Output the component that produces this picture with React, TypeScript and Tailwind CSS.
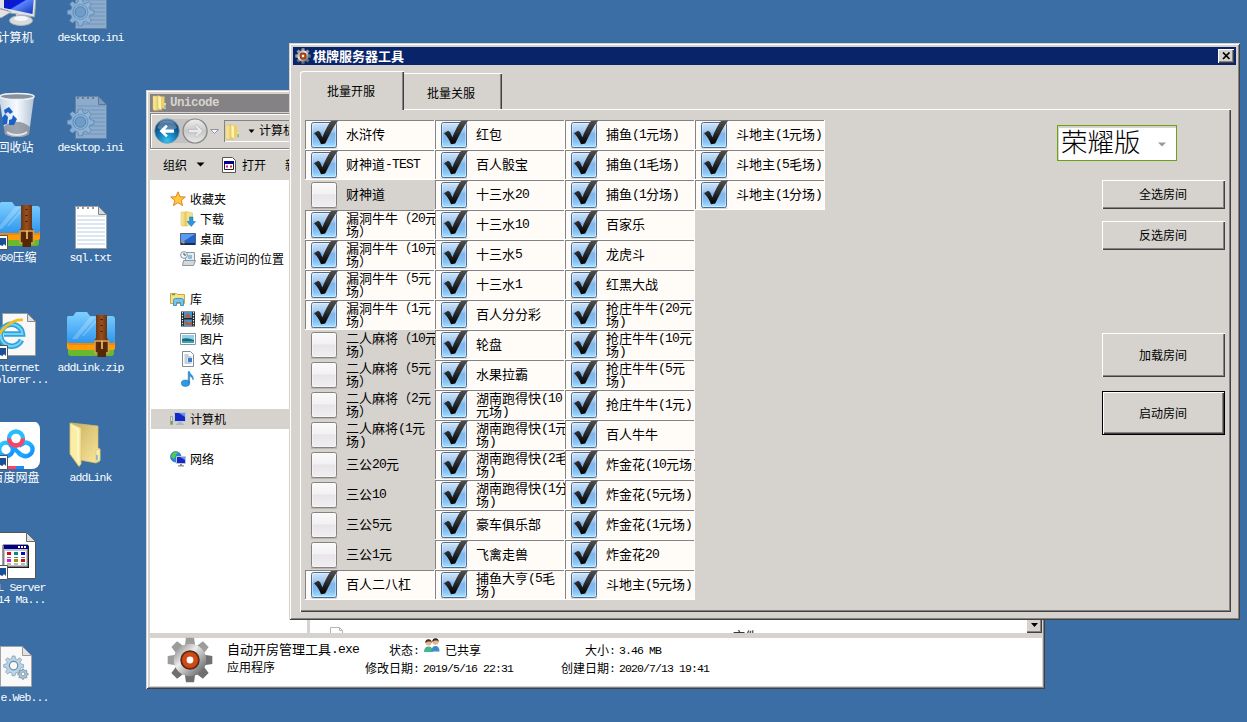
import React from "react";

const RAISED =
  "bg-[#d6d3ce] shadow-[inset_1px_1px_0_#fff,inset_-1px_-1px_0_#424142,inset_-2px_-2px_0_#848284]";
const WINDOW =
  "bg-[#d6d3ce] shadow-[inset_1px_1px_0_#d6d3ce,inset_-1px_-1px_0_#424142,inset_2px_2px_0_#fff,inset_-2px_-2px_0_#848284]";

/* Splits a label so that Latin runs take half-width monospaced cells beside full-width Han glyphs. */
function T({ s, wide = false }: { s: string; wide?: boolean }) {
  const parts = s.split(/([\x20-\x7e]+)/).filter(Boolean);
  return (
    <>
      {parts.map((p, i) =>
        /^[\x20-\x7e]+$/.test(p) ? (
          <span
            key={i}
            className={
              wide
                ? "relative -top-px font-['Liberation_Mono',monospace] text-[13px] leading-none tracking-[-0.8px]"
                : "relative -top-px font-['Liberation_Mono',monospace] text-[11.5px] leading-none tracking-[-0.9px]"
            }
          >
            {p}
          </span>
        ) : (
          <span key={i}>{p}</span>
        )
      )}
    </>
  );
}

/* ---------- drawings ---------- */

function Defs() {
  return (
    <svg width="0" height="0" className="absolute">
      <defs>
        <linearGradient id="ckBlue" x1="0" y1="0" x2="0" y2="1">
          <stop offset="0" stopColor="#d4e6f8" />
          <stop offset="0.35" stopColor="#a3c9f0" />
          <stop offset="0.45" stopColor="#7db4ea" />
          <stop offset="0.75" stopColor="#86bff2" />
          <stop offset="1" stopColor="#a9e4ff" />
        </linearGradient>
        <linearGradient id="ckGray" x1="0" y1="0" x2="0" y2="1">
          <stop offset="0" stopColor="#fbfbfb" />
          <stop offset="0.45" stopColor="#f3f1f3" />
          <stop offset="0.5" stopColor="#e7e5e8" />
          <stop offset="1" stopColor="#f1eff1" />
        </linearGradient>
        <linearGradient id="tick" x1="0" y1="0" x2="0" y2="1">
          <stop offset="0" stopColor="#505050" />
          <stop offset="0.5" stopColor="#2c2c2c" />
          <stop offset="1" stopColor="#000" />
        </linearGradient>
        <linearGradient id="fold" x1="0" y1="0" x2="1" y2="0">
          <stop offset="0" stopColor="#fbeea4" />
          <stop offset="1" stopColor="#e0bf55" />
        </linearGradient>
        <linearGradient id="foldBack" x1="0" y1="0" x2="1" y2="1">
          <stop offset="0" stopColor="#c7ae62" />
          <stop offset="1" stopColor="#fae99c" />
        </linearGradient>
        <linearGradient id="scr" x1="0" y1="0" x2="1" y2="1">
          <stop offset="0" stopColor="#1020a0" />
          <stop offset="0.45" stopColor="#0818e0" />
          <stop offset="0.5" stopColor="#5a86f8" />
          <stop offset="1" stopColor="#1030c0" />
        </linearGradient>
        <linearGradient id="bin" x1="0" y1="0" x2="1" y2="0">
          <stop offset="0" stopColor="#c6d4e4" />
          <stop offset="0.5" stopColor="#f8fbff" />
          <stop offset="1" stopColor="#b3c2d4" />
        </linearGradient>
        <linearGradient id="zipBlue" x1="0" y1="0" x2="0" y2="1">
          <stop offset="0" stopColor="#7fd0ff" />
          <stop offset="1" stopColor="#2f97ee" />
        </linearGradient>
        <linearGradient id="belt" x1="0" y1="0" x2="1" y2="0">
          <stop offset="0" stopColor="#5e2c10" />
          <stop offset="0.5" stopColor="#98501f" />
          <stop offset="1" stopColor="#5a280d" />
        </linearGradient>
        <linearGradient id="steel" x1="0" y1="0" x2="1" y2="1">
          <stop offset="0" stopColor="#777" />
          <stop offset="0.4" stopColor="#ececec" />
          <stop offset="0.65" stopColor="#a8a8a8" />
          <stop offset="1" stopColor="#4c4c4c" />
        </linearGradient>
        <radialGradient id="backBtn" cx="0.5" cy="0.9" r="0.9">
          <stop offset="0" stopColor="#2fc4f4" />
          <stop offset="0.45" stopColor="#1278b4" />
          <stop offset="0.8" stopColor="#0d4276" />
          <stop offset="1" stopColor="#6e9cc0" />
        </radialGradient>
        <linearGradient id="fwdBtn" x1="0" y1="0" x2="0" y2="1">
          <stop offset="0" stopColor="#eee" />
          <stop offset="0.5" stopColor="#c8c8c8" />
          <stop offset="1" stopColor="#e8e8e8" />
        </linearGradient>
        <linearGradient id="baidu" x1="0" y1="0" x2="1" y2="1">
          <stop offset="0" stopColor="#2cd0ff" />
          <stop offset="1" stopColor="#148cff" />
        </linearGradient>
      </defs>
    </svg>
  );
}

const GEAR =
  "M13.6 0h4.8l.8 4.6 3 1.3 4-2.8 3.3 3.3-2.7 3.9 1.2 3 4.6.8v4.8l-4.6.8-1.3 3 2.8 4-3.3 3.3-3.9-2.7-3 1.2-.9 4.5h-4.8l-.8-4.6-3-1.3-4 2.8-3.3-3.3 2.7-3.9-1.2-3-4.5-.9v-4.8l4.6-.8 1.3-3-2.8-4 3.3-3.3 3.9 2.7 3-1.2z";

/* Eight broad, blunt teeth around a solid hub. */
const COG = [0, 45, 90, 135, 180, 225, 270, 315];

function Check({ on }: { on: boolean }) {
  return (
    <svg width="30" height="30" viewBox="0 0 30 30" className="shrink-0">
      <rect x="1.5" y="27" width="27" height="2" rx="1" fill="#000" opacity="0.13" />
      <rect x="2.5" y="2.5" width="25" height="25" rx="2" fill={on ? "url(#ckBlue)" : "url(#ckGray)"} stroke={on ? "#4a6c98" : "#85827f"} />
      <rect x="3.5" y="3.5" width="23" height="23" rx="1" fill="none" stroke="#fff" strokeOpacity="0.4" />
      {on && <path d="M5 13.2 9 10.7 11 12l2.4 5.2C16.500 10 19 4.500 22 1l7.200-.6C24 7 20 16 16.200 23.600l-4.200.7C10.500 20 8.500 16.500 5 13.200z" fill="url(#tick)" />}
    </svg>
  );
}

function AppGear({ className }: { className: string }) {
  return (
    <svg viewBox="0 0 34 34" className={className}>
      {COG.map((a) => (
        <path key={a} d="M13 8l1-7.500h6L21 8z" fill={a > 45 && a < 270 ? "#6f6f6f" : "#9c9c9c"} transform={`rotate(${a} 17 17)`} />
      ))}
      <circle cx="17" cy="17" r="12" fill="url(#steel)" />
      <circle cx="17" cy="17" r="7.200" fill="#5c2a18" />
      <circle cx="17" cy="17" r="5.900" fill="#cf4a14" />
      <circle cx="17" cy="17" r="2.500" fill="#fff" />
    </svg>
  );
}

function SmallFolder({ className }: { className: string }) {
  return (
    <svg viewBox="0 0 16 16" className={className}>
      <path d="M1 1h6l1 1v13L2 15.500 1 14z" fill="url(#fold)" stroke="#d8b84c" strokeWidth="0.5" />
      <path d="M7 1.500h5.500v12H7z" fill="#ecd06a" />
      <path d="M6 0.500 9.500 2v13.500L6 13z" fill="#fdf3b4" stroke="#d8b84c" strokeWidth="0.5" />
      <path d="M12 8h2v6h-2z" fill="#f2dc7c" />
      <path d="M12.500 10h1.200v3.500h-1.200z" fill="#4ba8dd" />
    </svg>
  );
}

function Shortcut() {
  return (
    <g>
      <path d="M5 33.500h10.500v14H5z" fill="#fff" stroke="#555" />
      <path d="M8 36h6v8l-2-2-1.500 2L8 43z" fill="#1b4f95" />
    </g>
  );
}

function Page({ lines = true }: { lines?: boolean }) {
  return (
    <g>
      <path d="M8.500 4.500h23l8 8v34h-31z" fill="#fff" stroke="#9aa0a8" />
      {lines && (
        <g>
          <path d="M10 14h28M10 18h28M10 22h28M10 26h28M10 30h28M10 34h28M10 38h28M10 42h28" stroke="#b9cde0" />
          <path d="M10 6h2m3 0h2m3 0h2m3 0h2" stroke="#777" strokeWidth="1.600" />
        </g>
      )}
      <path d="M31.500 4.500v8h8z" fill="#d5d9de" stroke="#888" />
    </g>
  );
}

function ComputerIcon() {
  return (
    <svg width="48" height="48" viewBox="0 0 48 48">
      <path d="M5 14h39l-1.500 21L6 29z" fill="#dfe3e8" stroke="#9aa" />
      <path d="M12 14h30l-1.500 18L12 26z" fill="url(#scr)" />
      <path d="M0 31l7-5 12 4-10 6z" fill="#e3e3e3" stroke="#999" strokeWidth="0.600" />
      <path d="M1 32l8-5 8 2" stroke="#888" fill="none" strokeDasharray="2 1" />
      <path d="M24 32h9v6h-9z" fill="#c4c8cc" />
      <ellipse cx="29" cy="38.500" rx="11.500" ry="5" fill="#d9dcdf" stroke="#b0b4b8" />
      <ellipse cx="29" cy="36.500" rx="7" ry="2.500" fill="#f5f6f7" />
    </svg>
  );
}

function IniIcon() {
  return (
    <svg width="48" height="48" viewBox="0 0 48 48">
      <g opacity="0.42">
        <Page />
      </g>
      <g transform="translate(0.500 17) scale(0.880)" opacity="0.9">
        <path d={GEAR} transform="scale(0.92)" fill="#8fb6da" stroke="#5883b0" />
        <circle cx="14.700" cy="14.700" r="8.500" fill="none" stroke="#5f8ab6" />
        <circle cx="14.700" cy="14.700" r="6" fill="#6d9bc8" stroke="#4a7aac" />
      </g>
    </svg>
  );
}

function BinIcon() {
  return (
    <svg width="48" height="48" viewBox="0 0 48 48">
      <path d="M7 5h35l-5 37c-4 4-19 4-24 0z" fill="url(#bin)" />
      <path d="M11 35c8-7 19-7 27 0l-1 7c-5 4-18 4-24 0z" fill="#6f7780" opacity="0.65" />
      <ellipse cx="25" cy="4.500" rx="17" ry="3" fill="#87919d" stroke="#eef2f6" strokeWidth="1.500" />
      <g fill="#1a62c8">
        <path d="M12 18l5-3 4 5-3 2-2-2-3 2z" />
        <path d="M10 26l3-4 3 3-1 7-4 1z" />
        <path d="M17 33v-5l3-1 1-4 4 4-3 6z" />
      </g>
      <path d="M15 40c5 4 15 4 20 0" stroke="#e6e6e6" strokeWidth="2" fill="none" />
    </svg>
  );
}

function ZipIcon({ shortcut = false }: { shortcut?: boolean }) {
  return (
    <svg width="48" height="48" viewBox="0 0 48 48">
      <path d="M1 28h46v13c0 2-1 3-3 3H4c-2 0-3-1-3-3z" fill="#67ba30" />
      <path d="M0 22h48v15c-1 1-2 1-3 1H3c-2 0-3-1-3-3z" fill="#ff9c08" />
      <path d="M0 28h48v5H3c-2 0-3-2-3-3z" fill="#e87400" opacity="0.5" />
      <path d="M0 6c0-2 1-2 3-2h3l3-4h11l3 4h22c2 0 3 1 3 3v21c0 2-1 3-3 3H3c-2 0-3-1-3-3z" fill="url(#zipBlue)" />
      <path d="M23 5l-18 22h5L29 5zM31 5 15 24h2L34 5z" fill="#fff" opacity="0.22" />
      <path d="M29 3h11v23l2 3H27l2-3z" fill="url(#belt)" />
      <path d="M34.500 7v1m0 5v1m0 5v1" stroke="#32180a" strokeWidth="2" />
      <rect x="28" y="29" width="13.500" height="12" fill="#5a2a0c" stroke="#d8a04c" strokeWidth="1.600" />
      <path d="M30.500 31h8.500v14h-8.500z" fill="#552709" />
      <path d="M35 29v8" stroke="#ffd070" strokeWidth="1.500" />
      {shortcut && <Shortcut />}
    </svg>
  );
}

function TxtIcon() {
  return (
    <svg width="48" height="48" viewBox="0 0 48 48">
      <Page />
    </svg>
  );
}

function IeIcon() {
  return (
    <svg width="48" height="48" viewBox="0 0 48 48">
      <path d="M10.500 1.500h25l8 8v34h-33z" fill="#f8f8f8" stroke="#9a9a9a" />
      <path d="M35.500 1.500v8h8z" fill="#ddd" stroke="#888" />
      <path d="M29.500 28A11 11 0 1 1 30.500 22H12" fill="none" stroke="#2fa4dc" strokeWidth="5.500" />
      <path d="M29.500 28A11 11 0 1 1 30.500 22H12" fill="none" stroke="#79d2f4" strokeWidth="2" />
      <path d="M4 29C8 17 20 7 31 8" fill="none" stroke="#f5bd1c" strokeWidth="2.600" />
      <Shortcut />
    </svg>
  );
}

function BaiduIcon() {
  return (
    <svg width="48" height="48" viewBox="0 0 48 48">
      <rect x="0" y="-1" width="48" height="48" rx="8" fill="#fff" />
      <circle cx="14" cy="27.500" r="6.800" fill="none" stroke="url(#baidu)" strokeWidth="4.300" />
      <path d="M26.500 31q8 6.500 13 0a6.800 6.800 0 0 0-9-9.500" fill="none" stroke="url(#baidu)" strokeWidth="4.300" />
      <path d="M18 22.500 28 32" stroke="#1ba0ff" strokeWidth="4.300" />
      <path d="M27 24l5-3" stroke="#1ba0ff" strokeWidth="4" />
      <circle cx="24" cy="16.500" r="7" fill="#fff" stroke="#26bdff" strokeWidth="4.300" />
      <path d="M17 16.500a7 7 0 0 0 14 0" fill="none" stroke="#ff4262" strokeWidth="4.300" />
      <path d="M15 44h9v3h-9z" fill="#ff4262" />
      <path d="M24 44h8v3h-8z" fill="#168eff" />
      <Shortcut />
    </svg>
  );
}

function FolderIcon() {
  return (
    <svg width="48" height="48" viewBox="0 0 48 48">
      <path d="M4 1l27 3v22l2 1v12l-4 2-16-3z" fill="url(#foldBack)" stroke="#d9c06a" strokeWidth="0.700" />
      <path d="M3 1l11 5v36l-2 2.500L3 32z" fill="#fbeca6" stroke="#dcc36c" strokeWidth="0.800" />
      <path d="M5 4l6 4v32" fill="none" stroke="#fff8d0" strokeWidth="1.500" />
      <path d="M29 28l4-1v11l-4 2z" fill="#fbeeb0" stroke="#d9c06a" strokeWidth="0.600" />
      <path d="M30 33v5" stroke="#45a7dc" strokeWidth="1.200" />
    </svg>
  );
}

function SqlIcon() {
  return (
    <svg width="48" height="48" viewBox="0 0 48 48">
      <path d="M2.500 0.500h32l9 9v37h-41z" fill="#fff" stroke="#555" />
      <path d="M34.500 0.500v9h9z" fill="#ddd" stroke="#666" />
      <path d="M12 14h25v22H12z" fill="#000" />
      <path d="M11 13h25v22H11z" fill="#c6c3c6" stroke="#424142" />
      <path d="M12 13h24v4H12z" fill="#00008c" />
      <path d="M26 14h2v2h-2zM29 14h2v2h-2zM32 14h2v2h-2z" fill="#fff" />
      <path d="M13 19h21v14H13z" fill="#fff" />
      <path d="M15 20h4v3h-4zM29 27h4v3h-4z" fill="#d01010" />
      <path d="M22 20h4v3h-4z" fill="#008c8c" />
      <path d="M29 20h4v3h-4z" fill="#0010b8" />
      <path d="M15 27h4v3h-4z" fill="#e010d0" />
      <path d="M22 27h4v3h-4z" fill="#a09000" />
      <path d="M15 25.500h4M22 25.500h4M29 25.500h4M15 32h4M22 32h4M29 32h4" stroke="#777" />
      <Shortcut />
    </svg>
  );
}

function WebIcon() {
  return (
    <svg width="48" height="48" viewBox="0 0 48 48">
      <path d="M8.500 4.500h22l9 9v31h-31z" fill="#f9f9fa" stroke="#a3a3a3" />
      <path d="M30.500 4.500v9h9z" fill="#e2e2e2" stroke="#999" />
      <g transform="translate(12 14) scale(0.600)">
        <path d={GEAR} fill="#b9d4e6" stroke="#6d8ba0" />
        <circle cx="16" cy="16" r="7" fill="#f9f9fa" stroke="#6d8ba0" strokeWidth="2" />
      </g>
      <g transform="translate(26 27) scale(0.310)">
        <path d={GEAR} fill="#a9c6da" stroke="#5a7890" strokeWidth="2" />
        <circle cx="16" cy="16" r="6" fill="#fff" stroke="#5a7890" strokeWidth="2" />
      </g>
    </svg>
  );
}

type NavKind = "star" | "down" | "desk" | "recent" | "lib" | "video" | "pic" | "doc" | "music" | "pc" | "net";

function NavIcon({ kind }: { kind: NavKind }) {
  return (
    <svg width="16" height="16" viewBox="0 0 16 16" className="shrink-0">
      {kind === "star" && <path d="M8 .8l2 4.900 5.300.3-4.100 3.400 1.400 5.200L8 11.700l-4.600 2.900 1.400-5.200L.7 6 6 5.700z" fill="#ffc93c" stroke="#e0781c" strokeWidth="0.900" />}
      {kind === "down" && (
        <g>
          <path d="M1 1h6v14H2l-1-1z" fill="url(#fold)" stroke="#d8b84c" strokeWidth="0.500" />
          <path d="M6 .5 12.500 2v11L6 15z" fill="#f5e088" stroke="#d8b84c" strokeWidth="0.500" />
          <path d="M9.500 6h3.500v4.500h2.500L11.300 15.500 7 10.500h2.500z" fill="#2a96e0" stroke="#1272b8" strokeWidth="0.500" />
        </g>
      )}
      {kind === "desk" && (
        <g>
          <path d="M.5 2.500h15v11H.5z" fill="#2464c8" stroke="#54607c" />
          <path d="M1 3h14L1 12z" fill="#5a9cf0" />
          <path d="M1 12h14v2H1z" fill="#1c2c4c" />
          <path d="M2.500 10.500h2v2h-2z" fill="#f0a030" />
        </g>
      )}
      {kind === "recent" && (
        <g>
          <path d="M5.500 1.500h9v10h-9z" fill="#e7ecef" stroke="#8c979e" />
          <path d="M3.500 9.500h12l-2 5h-11z" fill="#d2d8dc" stroke="#8c979e" />
          <path d="M8 5h4M8 7h4" stroke="#3a8cc8" />
          <circle cx="4" cy="4" r="3.400" fill="#eef4f8" stroke="#8898a4" />
          <path d="M4 2v2h2" stroke="#456" fill="none" />
        </g>
      )}
      {kind === "lib" && (
        <g>
          <path d="M.5 2.500h6l1 1h7v9H.5z" fill="#f6e08c" stroke="#cba845" />
          <path d="M2 3.500h3" stroke="#58b030" strokeWidth="1.500" />
          <path d="M3.500 14.500v-5q0-2 2-2h6q2 0 2 2v5h-3v-3h-4v3z" fill="#79c4ea" stroke="#4296c4" />
        </g>
      )}
      {kind === "video" && (
        <g>
          <path d="M1 .5h14v15H1z" fill="#1e2426" />
          <path d="M4 1h8v6H4zM4 8.500h8V15H4z" fill="#3d96d8" />
          <path d="M4 6l4-4 4 5zM4 9l5 3 3-2v4H6z" fill="#c05830" />
          <path d="M2.500 1v14M13.500 1v14" stroke="#e8ecec" strokeWidth="1.200" strokeDasharray="1.500 1.200" />
        </g>
      )}
      {kind === "pic" && (
        <g>
          <path d="M.5 2.500h15v11H.5z" fill="#fff" stroke="#8a9298" />
          <path d="M2 4h12v8H2z" fill="#8ed0ee" />
          <path d="M2 8q5-2 12 1v3H2z" fill="#1b6d6a" />
          <path d="M2 10h12v2H2z" fill="#3aa0bc" />
        </g>
      )}
      {kind === "doc" && (
        <g>
          <path d="M2.500.5h8l3 3v12h-11z" fill="#fff" stroke="#858c92" />
          <path d="M4.500 4h4M4.500 6h7M4.500 8h3M4.500 10h3M4.500 12h7" stroke="#8ba0b8" />
          <path d="M8 7h4v4H8z" fill="#3a7cc8" />
        </g>
      )}
      {kind === "music" && (
        <g fill="#2e9be0" stroke="#1b6fb0" strokeWidth="0.500">
          <ellipse cx="5.500" cy="12.200" rx="4.200" ry="3.200" />
          <path d="M8.200 12V.6h1.400c0 3 5 4 3.400 8.400-.2-2.500-2-3.500-3.400-4V12z" />
        </g>
      )}
      {kind === "pc" && (
        <g>
          <path d="M.5 5.500h2v8h-2z" fill="#dfe4e0" stroke="#88908a" strokeWidth="0.700" />
          <path d="M1 10h1.500v3H1z" fill="#46b43c" />
          <path d="M4.500 1.500h11v9h-11z" fill="#1428c8" stroke="#c2c8d0" />
          <path d="M9 2h6v4z" fill="#6a90f8" />
          <path d="M8 11h4v1.500h2V14H6v-1.500h2z" fill="#b0b6bc" />
        </g>
      )}
      {kind === "net" && (
        <g>
          <circle cx="5.800" cy="5.800" r="5.300" fill="#2c86d8" stroke="#1a5ca8" strokeWidth="0.600" />
          <path d="M2 3q3-3 6-2l-2 3-2 4-3-2z" fill="#58c848" />
          <path d="M6.500 5.500h9v7h-9z" fill="#1428c8" stroke="#c2c8d0" />
          <path d="M10 6h5v3z" fill="#6a90f8" />
          <path d="M10 13h2v1.200h2V15.500H8v-1.300h2z" fill="#889" />
        </g>
      )}
    </svg>
  );
}

/* ---------- desktop ---------- */

type DeskItem = { icon: React.ReactNode; lines: string[]; cut?: boolean };

const COL_A: DeskItem[] = [
  { icon: <ComputerIcon />, lines: ["计算机"] },
  { icon: <BinIcon />, lines: ["回收站"] },
  { icon: <ZipIcon shortcut />, lines: ["360压缩"] },
  { icon: <IeIcon />, lines: ["Internet", "Explorer..."] },
  { icon: <BaiduIcon />, lines: ["百度网盘"] },
  { icon: <SqlIcon />, lines: ["SQL Server", "2014 Ma..."] },
  { icon: <WebIcon />, lines: ["e.Web..."], cut: true },
];

const COL_B: DeskItem[] = [
  { icon: <IniIcon />, lines: ["desktop.ini"] },
  { icon: <IniIcon />, lines: ["desktop.ini"] },
  { icon: <TxtIcon />, lines: ["sql.txt"] },
  { icon: <ZipIcon />, lines: ["addLink.zip"] },
  { icon: <FolderIcon />, lines: ["addLink"] },
];

function DeskColumn({ items, className }: { items: DeskItem[]; className: string }) {
  return (
    <div className={className}>
      {items.map((it, i) => (
        <div key={i} className="flex h-[110px] shrink-0 flex-col items-center">
          {it.icon}
          <div className={it.cut ? "mt-px mr-px w-[66px] text-right text-white" : "mt-px mr-px text-center text-white"}>
            {it.lines.map((l) => (
              <div key={l} className="h-3 leading-3 whitespace-pre">
                <T s={l} />
              </div>
            ))}
          </div>
        </div>
      ))}
    </div>
  );
}

/* ---------- explorer window ---------- */

const NAV: ({ kind: NavKind; label: string; child?: boolean; active?: boolean } | null)[] = [
  { kind: "star", label: "收藏夹" },
  { kind: "down", label: "下载", child: true },
  { kind: "desk", label: "桌面", child: true },
  { kind: "recent", label: "最近访问的位置", child: true },
  null,
  { kind: "lib", label: "库" },
  { kind: "video", label: "视频", child: true },
  { kind: "pic", label: "图片", child: true },
  { kind: "doc", label: "文档", child: true },
  { kind: "music", label: "音乐", child: true },
  null,
  { kind: "pc", label: "计算机", active: true },
  null,
  { kind: "net", label: "网络" },
];

function Explorer() {
  return (
    <div className={`absolute top-[90px] left-[146px] flex h-[599px] w-[899px] flex-col p-1 pr-[3px] pb-[3px] ${WINDOW}`}>
      <div className="flex h-[18px] shrink-0 items-center bg-[#848284] pl-[2px]">
        <SmallFolder className="h-4 w-4" />
        <span className="ml-[2px] font-['Liberation_Mono',monospace] text-[12.5px] leading-none font-bold tracking-[-0.5px] text-[#d6d3ce]">Unicode</span>
      </div>
      <div className="mt-px flex h-[36px] shrink-0 items-center border border-[#848284] pl-[3px] shadow-[inset_1px_1px_0_#fff,0_1px_0_#fff]">
        <svg width="68" height="30" viewBox="0 0 68 30">
          <rect x="2" y="3" width="52" height="24" rx="12" fill="#c2c2c2" />
          <circle cx="13" cy="15" r="12.300" fill="url(#backBtn)" stroke="#8298aa" strokeWidth="0.800" />
          <path d="M3 12a10.500 10.500 0 0 1 20 0q-10 5-20 0z" fill="#fff" opacity="0.280" />
          <path d="M5.500 15l6.500-6.300 1.800 1.800L11 13.400h9v3.400h-9l2.800 2.700L12 21.300z" fill="#fff" />
          <circle cx="41" cy="15" r="12" fill="url(#fwdBtn)" stroke="#848484" strokeWidth="1.200" />
          <path d="M49 15l-6.500-6.300-1.800 1.800 2.800 2.900h-9v3.400h9l-2.800 2.700 1.800 1.800z" fill="#e9e9e9" stroke="#b4b4b4" strokeWidth="0.700" />
          <path d="M56.500 13.500h8l-4 4z" fill="#f4f6f8" stroke="#8a94a2" />
        </svg>
        <div className="ml-[2px] flex h-[22px] flex-1 items-center border-t border-l border-[#848284] shadow-[inset_0_-1px_0_#fff]">
          <SmallFolder className="h-4 w-4" />
          <svg width="9" height="5" viewBox="0 0 9 5" className="ml-[6px]">
            <path d="M1.500 0.500h6l-3 3.500z" fill="#000" />
          </svg>
          <span className="-mt-1 ml-[3px] text-black">计算机</span>
        </div>
      </div>
      <div className="flex h-[31px] shrink-0 items-center pl-[13px]">
        <span>组织</span>
        <svg width="9" height="5" viewBox="0 0 9 5" className="ml-[9px]">
          <path d="M0.500 0.500h8l-4 4z" fill="#000" />
        </svg>
        <svg width="15" height="16" viewBox="0 0 15 16" className="ml-[17px]">
          <path d="M.5.500h10l3 3v12H.5z" fill="#fff" stroke="#555" />
          <path d="M2.500 4.500h9v8h-9z" fill="#fff" stroke="#222" />
          <path d="M2 4h10v3H2z" fill="#00008c" />
          <path d="M4 8.500h2v2H4z" fill="#d010d0" />
          <path d="M8 8.500h2v2H8z" fill="#d02020" />
        </svg>
        <span className="ml-[5px]">打开</span>
        <span className="ml-[19px]">新建文件夹</span>
      </div>
      <div className="flex h-[453px] shrink-0 overflow-hidden">
        <div className="w-[157px] shrink-0 bg-white pt-[9px] pl-px">
          {NAV.map((n, i) =>
            n === null ? (
              <div key={i} className="h-5" />
            ) : (
              <div
                key={i}
                className={
                  n.active
                    ? "flex h-5 items-center gap-1 bg-[#d6d3ce] pl-[19px]"
                    : n.child
                      ? "flex h-5 items-center gap-1 pl-[29px]"
                      : "flex h-5 items-center gap-1 pl-[19px]"
                }
              >
                <NavIcon kind={n.kind} />
                <span className="whitespace-nowrap">{n.label}</span>
              </div>
            )
          )}
        </div>
        <div className="w-[3px] shrink-0 bg-[#d6d3ce]" />
        <div className="flex flex-1 flex-col justify-end overflow-hidden bg-white">
          <div className="flex h-[20px] shrink-0 items-end pl-5">
            <svg width="13" height="18" viewBox="0 0 13 18">
              <path d="M.5.500h12v9H.5z" fill="#fff" stroke="#777" />
            </svg>
          </div>
          <div className="flex h-[12px] shrink-0 items-start overflow-hidden pt-[6px] pl-5">
            <svg width="13" height="16" viewBox="0 0 13 16" className="shrink-0">
              <path d="M.5.500h9l3 3v12H.5z" fill="#fff" stroke="#b5b5b5" />
              <path d="M9.500.500v3h3" fill="none" stroke="#b5b5b5" />
            </svg>
            <span className="ml-[390px] leading-[18px]">文件</span>
          </div>
        </div>
        <div className="flex w-4 shrink-0 flex-col justify-end bg-[#ebe9e6]">
          <div className={`flex h-4 items-center justify-center ${RAISED}`}>
            <svg width="7" height="4" viewBox="0 0 7 4">
              <path d="M0 0h7L3.500 4z" fill="#000" />
            </svg>
          </div>
        </div>
      </div>
      <div className="mt-[5px] flex flex-1 bg-white">
        <AppGear className="-mt-px ml-[17px] h-[46px] w-[46px] shrink-0" />
        <div className="ml-[14px] w-[138px] pt-[2px]">
          <div className="h-[18px] text-[13px] leading-[18px] whitespace-nowrap">
            <T s="自动开房管理工具.exe" wide />
          </div>
          <div className="h-[18px] leading-[18px]">应用程序</div>
        </div>
        <div className="w-[54px] pt-[3px] text-right leading-[18px] whitespace-nowrap">
          <div className="h-[18px]">
            <T s="状态:" />
          </div>
          <div className="h-[18px]">
            <T s="修改日期:" />
          </div>
        </div>
        <div className="ml-1 w-[138px] pt-[3px] leading-[18px] whitespace-nowrap">
          <div className="flex h-[18px] items-center gap-[5px]">
            <svg width="16" height="16" viewBox="0 0 16 16" className="-mt-2 ml-px">
              <circle cx="4.500" cy="4.500" r="3" fill="#e4b48c" />
              <path d="M1.200 5a3.300 3.800 0 0 1 6.600 0L6.500 3.500h-3z" fill="#4a2c18" />
              <path d="M0 14q0-5.500 4.500-5.500T9 14z" fill="#46b48c" />
              <circle cx="11.500" cy="3.700" r="3" fill="#e4b48c" />
              <path d="M8.200 4a3.300 3.800 0 0 1 6.600 0l-1.300-1.500h-3z" fill="#33241c" />
              <path d="M7.500 13.500q0-5.500 4-5.500t4 5.500z" fill="#3c8cc8" />
            </svg>
            <span>已共享</span>
          </div>
          <div className="h-[18px]">
            <T s="2019/5/16 22:31" />
          </div>
        </div>
        <div className="w-[54px] pt-[3px] text-right leading-[18px] whitespace-nowrap">
          <div className="h-[18px]">
            <T s="大小:" />
          </div>
          <div className="h-[18px]">
            <T s="创建日期:" />
          </div>
        </div>
        <div className="ml-1 pt-[3px] leading-[18px] whitespace-nowrap">
          <div className="h-[18px]">
            <T s="3.46 MB" />
          </div>
          <div className="h-[18px]">
            <T s="2020/7/13 19:41" />
          </div>
        </div>
      </div>
    </div>
  );
}

/* ---------- tool dialog ---------- */

const ROOMS: { t: string[]; off?: boolean }[] = [
  { t: ["水浒传"] },
  { t: ["财神道-TEST"] },
  { t: ["财神道"], off: true },
  { t: ["漏洞牛牛（20元", "场）"] },
  { t: ["漏洞牛牛（10元", "场）"] },
  { t: ["漏洞牛牛（5元", "场）"] },
  { t: ["漏洞牛牛（1元", "场）"] },
  { t: ["二人麻将（10元", "场）"], off: true },
  { t: ["二人麻将（5元", "场）"], off: true },
  { t: ["二人麻将（2元", "场）"], off: true },
  { t: ["二人麻将(1元", "场)"], off: true },
  { t: ["三公20元"], off: true },
  { t: ["三公10"], off: true },
  { t: ["三公5元"], off: true },
  { t: ["三公1元"], off: true },
  { t: ["百人二八杠"] },
  { t: ["红包"] },
  { t: ["百人骰宝"] },
  { t: ["十三水20"] },
  { t: ["十三水10"] },
  { t: ["十三水5"] },
  { t: ["十三水1"] },
  { t: ["百人分分彩"] },
  { t: ["轮盘"] },
  { t: ["水果拉霸"] },
  { t: ["湖南跑得快(10", "元场)"] },
  { t: ["湖南跑得快(1元", "场)"] },
  { t: ["湖南跑得快(2毛", "场)"] },
  { t: ["湖南跑得快(1分", "场)"] },
  { t: ["豪车俱乐部"] },
  { t: ["飞禽走兽"] },
  { t: ["捕鱼大亨(5毛", "场)"] },
  { t: ["捕鱼(1元场)"] },
  { t: ["捕鱼(1毛场)"] },
  { t: ["捕鱼(1分场)"] },
  { t: ["百家乐"] },
  { t: ["龙虎斗"] },
  { t: ["红黑大战"] },
  { t: ["抢庄牛牛(20元", "场)"] },
  { t: ["抢庄牛牛(10元", "场)"] },
  { t: ["抢庄牛牛(5元", "场)"] },
  { t: ["抢庄牛牛(1元)"] },
  { t: ["百人牛牛"] },
  { t: ["炸金花(10元场)"] },
  { t: ["炸金花(5元场)"] },
  { t: ["炸金花(1元场)"] },
  { t: ["炸金花20"] },
  { t: ["斗地主(5元场)"] },
  { t: ["斗地主(1元场)"] },
  { t: ["斗地主(5毛场)"] },
  { t: ["斗地主(1分场)"] },
];

function Room({ t, off }: { t: string[]; off?: boolean }) {
  return (
    <div
      className={
        off
          ? "flex items-start overflow-hidden pl-1"
          : "flex items-start overflow-hidden bg-[#fffbf7] pl-1 shadow-[inset_-1px_-1px_0_#fff,inset_1px_1px_0_#848284]"
      }
    >
      <Check on={!off} />
      <div className="ml-[7px] flex h-[27px] flex-col justify-center text-[13px] whitespace-nowrap">
        {t.map((l) => (
          <div key={l} className="h-[13px] leading-[13px]">
            <T s={l} wide />
          </div>
        ))}
      </div>
    </div>
  );
}

function Dialog() {
  return (
    <div className={`absolute top-[43px] left-[289px] flex h-[577px] w-[951px] flex-col p-1 ${WINDOW}`}>
      <div className="flex h-[18px] shrink-0 items-center bg-[#0a246a] pr-[2px] pl-[2px]">
        <AppGear className="h-4 w-4" />
        <span className="-mt-[2px] ml-[2px] flex-1 text-[13px] leading-none font-bold text-white">棋牌服务器工具</span>
        <button className={`flex h-[14px] w-4 items-center justify-center ${RAISED}`}>
          <svg width="9" height="8" viewBox="0 0 9 8">
            <path d="M1 .5l6.500 6.500M7.500.500 1 7" stroke="#000" strokeWidth="1.700" />
          </svg>
        </button>
      </div>
      <div className="mt-[6px] ml-[7px] flex h-[38px] shrink-0 items-end">
        <div className="relative z-10 -mb-px flex h-[39px] w-[104px] items-center justify-center rounded-tl-[3px] bg-[#d6d3ce] pr-[2px] shadow-[inset_1px_1px_0_#fff,inset_-1px_0_0_#424142,inset_-2px_0_0_#848284]">
          批量开服
        </div>
        <div className="flex h-[36px] w-[98px] items-center justify-center pt-1 pr-[4px] shadow-[inset_0_1px_0_#fff,inset_-1px_0_0_#424142,inset_-2px_0_0_#848284]">
          批量关服
        </div>
      </div>
      <div className={`ml-[7px] flex h-[503px] w-[931px] shrink-0 justify-between pt-[11px] pr-[6px] pl-[5px] ${RAISED}`}>
        <div className="grid grid-flow-col auto-cols-[130px] grid-rows-[repeat(16,30px)]">
          {ROOMS.map((r, i) => (
            <Room key={i} t={r.t} off={r.off} />
          ))}
        </div>
        <div className="flex w-[168px] flex-col items-end pt-[5px]">
          <div className="flex h-[36px] w-[120px] items-start self-start border border-[#6ba20e] bg-white shadow-[inset_1px_2px_0_#d6d3ce]">
            <span className="ml-[2px] h-8 flex-1 pl-px text-[26.500px] leading-[30px] font-light whitespace-nowrap">荣耀版</span>
            <svg width="8" height="5" viewBox="0 0 8 5" className="mt-4 mr-[10px]">
              <path d="M0 .5h8L4 4.500z" fill="#9a9a9a" />
            </svg>
          </div>
          <button className={`mt-[19px] h-[29px] w-[123px] shrink-0 pr-px pb-[2px] ${RAISED}`}>全选房间</button>
          <button className={`mt-3 h-[29px] w-[123px] shrink-0 pr-px pb-[2px] ${RAISED}`}>反选房间</button>
          <button className={`mt-[83px] h-11 w-[123px] shrink-0 pr-px ${RAISED}`}>加载房间</button>
          <button className="mt-[14px] h-11 w-[123px] shrink-0 border border-black bg-[#d6d3ce] pr-px shadow-[inset_1px_1px_0_#fff,inset_-1px_-1px_0_#424142,inset_-2px_-2px_0_#848284]">
            启动房间
          </button>
        </div>
      </div>
    </div>
  );
}

export default function App() {
  return (
    <div className="relative h-[722px] w-[1247px] overflow-hidden bg-[#3a6ea5] font-['Noto_Sans_CJK_SC',sans-serif] text-[12px] leading-none text-black">
      <Defs />
      <div className="-mt-[18px] -ml-[21px] flex">
        <DeskColumn items={COL_A} className="flex w-[74px] flex-col" />
        <DeskColumn items={COL_B} className="flex w-[76px] flex-col" />
      </div>
      <Explorer />
      <Dialog />
    </div>
  );
}
